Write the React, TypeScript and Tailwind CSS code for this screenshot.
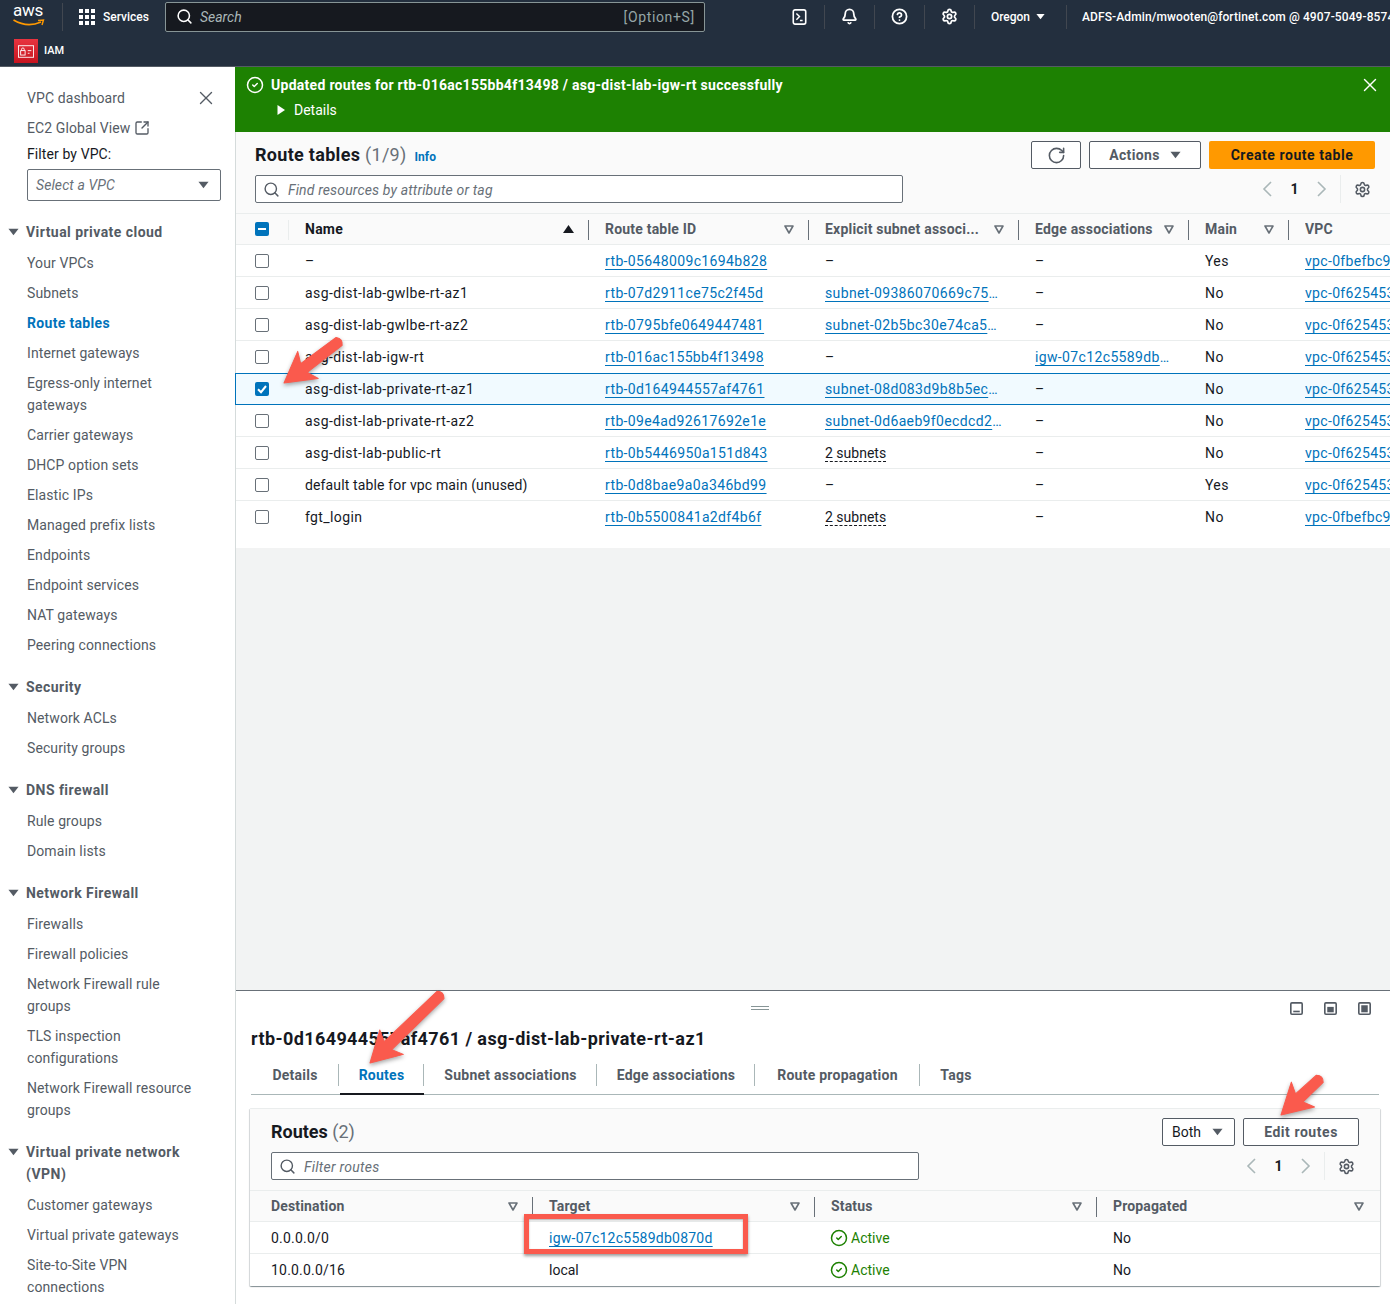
import { Bell, CircleCheck, CircleHelp, RotateCw, Search, Settings, SquareArrowOutUpRight, X } from "lucide-react";

const Caret = ({ className = "" }: { className?: string }) => (
  <svg viewBox="0 0 12 8" className={className}><polygon points="0.5,0.5 11.5,0.5 6,7.5" fill="currentColor" /></svg>
);
const FilterCaret = ({ className = "" }: { className?: string }) => (
  <svg viewBox="0 0 10 9" className={`h-[9px] w-[10px] text-[#687078] ${className}`}><polygon points="1,1 9,1 5,8" fill="none" stroke="currentColor" strokeWidth="1.6" strokeLinejoin="round" /></svg>
);
const SortUp = () => (
  <svg viewBox="0 0 11 8" className="h-[8px] w-[11px] text-[#16191f]"><polygon points="5.5,0 11,8 0,8" fill="currentColor" /></svg>
);
const Box = ({ state }: { state?: "on" | "mixed" }) =>
  state ? (
    <span className="flex h-[14px] w-[14px] items-center justify-center rounded-[2px] bg-[#0073bb]">
      {state === "on" ? (
        <svg viewBox="0 0 14 14" className="h-[14px] w-[14px]"><path d="M3 7.2 6 10.2 11 4" fill="none" stroke="#fff" strokeWidth="2" /></svg>
      ) : (
        <span className="h-[2px] w-[8px] bg-white" />
      )}
    </span>
  ) : (
    <span className="block h-[14px] w-[14px] rounded-[2px] border border-[#687078] bg-white" />
  );

const Chev = ({ d }: { d: string }) => (
  <svg viewBox="0 0 10 16" className="h-[16px] w-[10px]"><path d={d} fill="none" stroke="currentColor" strokeWidth="1.6" /></svg>
);

const Pager = () => (
  <div className="flex h-[28px] items-center text-[#aab7b8]">
    <Chev d="M9 1 2 8l7 7" />
    <span className="w-[45px] text-center text-[14px] font-bold text-[#16191f]">1</span>
    <Chev d="M1 1l7 7-7 7" />
    <span className="ml-[13px] h-[28px] w-px bg-[#eaeded]" />
    <Settings size={17} strokeWidth={2.2} className="ml-[13px] text-[#545b64]" />
  </div>
);

const FindBox = ({ w, text, track }: { w: string; text: string; track: string }) => (
  <div className={`flex h-[28px] items-center rounded-[2px] border border-[#687078] bg-white pl-[7px] ${w}`}>
    <Search size={17} strokeWidth={2} className="text-[#545b64]" />
    <span className={`ml-[8px] pt-[1px] text-[14px] italic text-[#687078] ${track}`}>{text}</span>
  </div>
);

const sections: { title: string[]; items: string[][] }[] = [
  { title: ["Virtual private cloud"], items: [["Your VPCs"], ["Subnets"], ["Route tables"], ["Internet gateways"], ["Egress-only internet", "gateways"], ["Carrier gateways"], ["DHCP option sets"], ["Elastic IPs"], ["Managed prefix lists"], ["Endpoints"], ["Endpoint services"], ["NAT gateways"], ["Peering connections"]] },
  { title: ["Security"], items: [["Network ACLs"], ["Security groups"]] },
  { title: ["DNS firewall"], items: [["Rule groups"], ["Domain lists"]] },
  { title: ["Network Firewall"], items: [["Firewalls"], ["Firewall policies"], ["Network Firewall rule", "groups"], ["TLS inspection", "configurations"], ["Network Firewall resource", "groups"]] },
  { title: ["Virtual private network", "(VPN)"], items: [["Customer gateways"], ["Virtual private gateways"], ["Site-to-Site VPN", "connections"]] },
];

const Sidebar = () => (
  <aside className="w-[236px] shrink-0 overflow-hidden border-r border-[#d5dbdb] bg-white pt-[20px] text-[14px] leading-[22px] tracking-[0.1px]">
    <div className="flex flex-col gap-[8px] pl-[27px]">
      <div className="flex h-[22px] items-center justify-between pr-[18px] text-[#545b64]">
        <span>VPC dashboard</span>
        <X size={22} strokeWidth={1.5} />
      </div>
      <div className="flex h-[22px] items-center gap-[4px] text-[#545b64]">
        <span>EC2 Global View</span>
        <SquareArrowOutUpRight size={16} strokeWidth={2} className="text-[#545b64]" />
      </div>
    </div>
    <div className="mt-[4px] pl-[27px] text-[#16191f]">Filter by VPC:</div>
    <div className="ml-[27px] mt-[4px] flex h-[32px] w-[194px] items-center justify-between rounded-[2px] border border-[#687078] pl-[8px] pr-[11px]">
      <span className="italic text-[#687078]">Select a VPC</span>
      <Caret className="h-[8px] w-[11px] text-[#545b64]" />
    </div>
    <div className="mt-[20px] flex flex-col gap-[20px]">
      {sections.map((s) => (
        <div key={s.title[0]}>
          <div className="relative pl-[26px] font-bold tracking-[0.45px] text-[#545b64]">
            <Caret className="absolute left-[8px] top-[7px] h-[8px] w-[11px]" />
            {s.title.map((t) => <div key={t}>{t}</div>)}
          </div>
          <div className="mt-[9px] flex flex-col gap-[8px] pl-[27px]">
            {s.items.map((it) => (
              <div key={it[0]} className={it[0] === "Route tables" ? "font-bold tracking-[0.33px] text-[#0073bb]" : "text-[#545b64]"}>
                {it.map((l) => <div key={l}>{l}</div>)}
              </div>
            ))}
          </div>
        </div>
      ))}
    </div>
  </aside>
);

const cols = "grid grid-cols-[53px_300px_220px_210px_170px_100px_1fr]";
const rows = [
  ["–", "rtb-05648009c1694b828", "–", "–", "Yes", "vpc-0fbefbc9a17"],
  ["asg-dist-lab-gwlbe-rt-az1", "rtb-07d2911ce75c2f45d", "subnet-09386070669c75d41", "–", "No", "vpc-0f625453a17"],
  ["asg-dist-lab-gwlbe-rt-az2", "rtb-0795bfe0649447481", "subnet-02b5bc30e74ca5d42", "–", "No", "vpc-0f625453a17"],
  ["asg-dist-lab-igw-rt", "rtb-016ac155bb4f13498", "–", "igw-07c12c5589db0870d", "No", "vpc-0f625453a17"],
  ["asg-dist-lab-private-rt-az1", "rtb-0d164944557af4761", "subnet-08d083d9b8b5ec412", "–", "No", "vpc-0f625453a17"],
  ["asg-dist-lab-private-rt-az2", "rtb-09e4ad92617692e1e", "subnet-0d6aeb9f0ecdcd2141", "–", "No", "vpc-0f625453a17"],
  ["asg-dist-lab-public-rt", "rtb-0b5446950a151d843", "2 subnets", "–", "No", "vpc-0f625453a17"],
  ["default table for vpc main (unused)", "rtb-0d8bae9a0a346bd99", "–", "–", "Yes", "vpc-0f625453a17"],
  ["fgt_login", "rtb-0b5500841a2df4b6f", "2 subnets", "–", "No", "vpc-0fbefbc9a17"],
];

const Cell = ({ v }: { v: string }) => {
  if (v === "2 subnets") return <div className="truncate px-[16px]"><span className="border-b border-dashed border-[#16191f]">{v}</span></div>;
  if (v.startsWith("vpc-")) return <div className="overflow-hidden whitespace-nowrap pl-[16px] tracking-[0.33px] text-[#0073bb] underline underline-offset-[3px]">{v}</div>;
  if (/^(rtb|subnet|igw)-/.test(v)) return <div className="truncate px-[16px] tracking-[0.36px] text-[#0073bb] underline underline-offset-[3px]">{v}</div>;
  if (v.startsWith("default")) return <div className="truncate px-[16px] tracking-[0.14px]">{v}</div>;
  return <div className="truncate px-[16px] tracking-[0.4px]">{v}</div>;
};

const Th = ({ label, icon = true }: { label: string; icon?: boolean }) => (
  <div className="flex h-full items-center justify-between pl-[16px] pr-[15px]">
    <span className="truncate font-bold tracking-[0.2px] text-[#545b64]">{label}</span>
    {icon && <FilterCaret className="shrink-0" />}
  </div>
);
const Sep = () => <span className="absolute right-0 top-[6px] h-[20px] w-px bg-[#687078]" />;

const RouteTable = () => (
  <section className="bg-white">
    <div className="bg-[#fafafa]">
      <div className="flex justify-between pl-[19px] pr-[15px] pt-[9px]">
        <div className="flex h-[28px] items-center">
          <h1 className="text-[18px] font-bold tracking-[0.3px] text-[#16191f]">Route tables <span className="font-normal text-[#687078]">(1/9)</span></h1>
          <span className="ml-[8px] mt-[3px] text-[12px] font-bold text-[#0073bb]">Info</span>
        </div>
        <div className="flex gap-[8px]">
          <button className="flex h-[28px] w-[50px] items-center justify-center rounded-[2px] border border-[#545b64] bg-white text-[#545b64]"><RotateCw size={19} strokeWidth={2} /></button>
          <button className="flex h-[28px] w-[112px] items-center justify-center gap-[10px] rounded-[2px] border border-[#545b64] bg-white font-bold tracking-[0.35px] text-[#545b64]">Actions<Caret className="h-[8px] w-[11px]" /></button>
          <button className="h-[28px] w-[166px] rounded-[2px] bg-[#ff9900] font-bold tracking-[0.55px] text-[#16191f]">Create route table</button>
        </div>
      </div>
      <div className="mt-[6px] flex justify-between pl-[19px] pr-[19px]">
        <FindBox w="w-[648px]" text="Find resources by attribute or tag" track="tracking-[0.15px]" />
        <Pager />
      </div>
      <div className={`${cols} mt-[10px] h-[32px] items-center border-y border-[#eaeded]`}>
        <div className="relative flex h-full items-center pl-[19px]"><Box state="mixed" /><span className="absolute right-0 top-[6px] h-[20px] w-px bg-[#eaeded]" /></div>
        <div className="relative flex h-full items-center justify-between pl-[16px] pr-[15px]"><span className="font-bold tracking-[0.25px] text-[#16191f]">Name</span><SortUp /><Sep /></div>
        <div className="relative h-full"><Th label="Route table ID" /><Sep /></div>
        <div className="relative h-full"><Th label="Explicit subnet associ..." /><Sep /></div>
        <div className="relative h-full"><Th label="Edge associations" /><Sep /></div>
        <div className="relative h-full"><Th label="Main" /><Sep /></div>
        <div className="relative h-full"><Th label="VPC" icon={false} /></div>
      </div>
    </div>
    {rows.map((r, i) => (
      <div key={i} className={`${cols} h-[32px] items-center text-[#16191f] ${i === 4 ? "-ml-px border-x-0 border-y border-l border-[#0073bb] bg-[#f1faff]" : i === 8 ? "" : i === 3 ? "" : "border-b border-[#eaeded]"}`}>
        <div className="flex items-center pl-[19px]"><Box state={i === 4 ? "on" : undefined} /></div>
        {r.map((v, j) => <Cell key={j} v={v} />)}
      </div>
    ))}
    <div className="h-[15px]" />
  </section>
);

const PrefIcon = ({ inner }: { inner: string }) => (
  <svg viewBox="0 0 12 12" className="h-[13px] w-[13px] text-[#545b64]">
    <rect x="0.75" y="0.75" width="10.5" height="10.5" rx="1" fill="none" stroke="currentColor" strokeWidth="1.5" />
    <path d={inner} fill="currentColor" />
  </svg>
);

const tabs = [
  { t: "Details", w: "w-[88px]" },
  { t: "Routes", w: "w-[85px]" },
  { t: "Subnet associations", w: "w-[173px]" },
  { t: "Edge associations", w: "w-[158px]" },
  { t: "Route propagation", w: "w-[165px]" },
  { t: "Tags", w: "w-[72px]" },
];

const thCols = "grid grid-cols-[283px_282px_282px_1fr]";
const RouteRow = ({ d, t, link, last }: { d: string; t: string; link?: boolean; last?: boolean }) => (
  <div className={`${thCols} h-[32px] items-center bg-white text-[#16191f] ${last ? "" : "border-b border-[#eaeded]"}`}>
    <div className="pl-[21px] tracking-[0.2px]">{d}</div>
    <div className="pl-[16px]">{link ? <span className="tracking-[0.25px] text-[#0073bb] underline underline-offset-[3px]">{t}</span> : t}</div>
    <div className="flex items-center gap-[3px] pl-[15px] text-[#1d8102]"><CircleCheck size={18} strokeWidth={2} />Active</div>
    <div className="pl-[16px]">No</div>
  </div>
);

const SplitPanel = () => (
  <section className="relative h-[314px] shrink-0 border-t border-[#687078] bg-white">
    <div className="flex h-[36px] items-start">
      <div className="flex flex-1 justify-center pr-[6px] pt-[15px]"><div className="h-[4px] w-[18px] border-y border-[#879596]" /></div>
      <div className="flex gap-[21px] pr-[19px] pt-[11px]">
        <PrefIcon inner="M3 8h6v1.5H3z" />
        <PrefIcon inner="M3 4.5h6v5H3z" />
        <PrefIcon inner="M3 3h6v6.5H3z" />
      </div>
    </div>
    <div className="pl-[15px] text-[18px] font-bold leading-[24px] tracking-[0.4px] text-[#16191f]">rtb-0d164944557af4761 / asg-dist-lab-private-rt-az1</div>
    <div className="ml-[15px] mr-[11px] mt-[9px] flex h-[35px] items-start border-b border-[#aab7b8]">
      {tabs.map((t, i) => (
        <div key={t.t} className={`relative flex h-[34px] items-center justify-center pb-[4px] font-bold tracking-[0.25px] ${t.w} ${i === 1 ? "text-[#0073bb]" : "text-[#545b64]"}`}>
          {t.t}
          {i === 1 && <span className="absolute bottom-[-1px] left-[1px] right-0 h-[2px] bg-[#16191f]" />}
          {i < 5 && <span className="absolute right-0 top-[4px] h-[22px] w-px bg-[#aab7b8]" />}
        </div>
      ))}
    </div>
    <div className="ml-[14px] mr-[10px] mt-[13px] overflow-hidden rounded-[1px] border-t border-[#eaeded] bg-[#fafafa] shadow-[0_1px_1px_0_rgba(0,28,36,0.3),1px_1px_1px_0_rgba(0,28,36,0.15),-1px_1px_1px_0_rgba(0,28,36,0.15)]">
      <div className="flex justify-between pl-[21px] pr-[21px] pt-[9px]">
        <h2 className="text-[18px] font-bold leading-[28px] text-[#16191f]">Routes <span className="font-normal text-[#687078]">(2)</span></h2>
        <div className="flex gap-[8px]">
          <div className="flex h-[28px] w-[73px] items-center justify-between rounded-[2px] border border-[#545b64] bg-white pl-[9px] pr-[11px] text-[#16191f]">Both<Caret className="h-[8px] w-[11px] text-[#545b64]" /></div>
          <button className="h-[28px] w-[116px] rounded-[2px] border border-[#545b64] bg-white font-bold tracking-[0.55px] text-[#545b64]">Edit routes</button>
        </div>
      </div>
      <div className="mt-[6px] flex justify-between pl-[21px] pr-[25px]">
        <FindBox w="w-[648px]" text="Filter routes" track="tracking-[0.25px]" />
        <Pager />
      </div>
      <div className={`${thCols} mt-[10px] h-[32px] border-y border-[#eaeded]`}>
        {["Destination", "Target", "Status", "Propagated"].map((l, i) => (
          <div key={l} className="relative h-full">
            <div className={`flex h-full items-center justify-between ${i === 0 ? "pl-[21px]" : "pl-[16px]"} ${i === 3 ? "pr-[16px]" : "pr-[15px]"}`}>
              <span className="font-bold tracking-[0.15px] text-[#545b64]">{l}</span>
              <FilterCaret />
            </div>
            {i < 3 && <Sep />}
          </div>
        ))}
      </div>
      <RouteRow d="0.0.0.0/0" t="igw-07c12c5589db0870d" link />
      <RouteRow d="10.0.0.0/16" t="local" last />
    </div>
  </section>
);

const Arrow = ({ x, y, angle, len }: { x: number; y: number; angle: number; len: number }) => (
  <g transform={`translate(${x} ${y}) rotate(${angle})`}>
    <path
      d={`M0 0 L30 -17 L25 -5.5 L${len - 3} -5 Q${len + 2} 0 ${len - 3} 5 L25 5.5 L30 17 Z`}
      fill="#fa5a4d"
      stroke="#fa5a4d"
      strokeWidth="1"
      strokeLinejoin="round"
    />
  </g>
);

const Annotations = () => (
  <svg className="pointer-events-none absolute left-0 top-0 h-[1304px] w-[1390px] [filter:drop-shadow(0_2px_2px_rgba(0,0,0,0.35))]" viewBox="0 0 1390 1304">
    <Arrow x={284} y={383} angle={-37} len={72} />
    <Arrow x={370} y={1063} angle={-44} len={101} />
    <Arrow x={1281} y={1115} angle={-43} len={56} />
  </svg>
);

const TopBar = () => (
  <header className="h-[67px] shrink-0 border-b border-[#545b64] bg-[#232f3e] text-white">
    <div className="flex h-[33px] items-center whitespace-nowrap">
      <div className="relative ml-[13px] h-[28px] w-[32px] shrink-0">
        <span className="absolute left-0 top-[-3px] text-[17px] leading-[20px] tracking-[-0.3px]">aws</span>
        <svg viewBox="0 0 32 9" className="absolute left-0 top-[16px] h-[9px] w-[32px]">
          <path d="M0.5 1 Q14 9 28 3" fill="none" stroke="#ff9900" strokeWidth="1.6" />
          <path d="M25 1.5 L30.5 1 L29 6" fill="none" stroke="#ff9900" strokeWidth="1.4" />
        </svg>
      </div>
      <span className="ml-[17px] h-[28px] w-px shrink-0 bg-[#414750]" />
      <div className="ml-[16px] grid h-[16px] w-[16px] shrink-0 grid-cols-3 gap-[2px]">
        {Array.from({ length: 9 }).map((_, i) => <span key={i} className="bg-white" />)}
      </div>
      <span className="ml-[8px] text-[12px] font-medium">Services</span>
      <div className="ml-[16px] flex h-[30px] w-[540px] shrink-0 items-center rounded-[2px] border border-[#879596] bg-[#16191f] pl-[10px] pr-[9px]">
        <Search size={17} strokeWidth={2.2} className="text-white" />
        <span className="ml-[7px] text-[14px] italic text-[#aab7b8]">Search</span>
        <span className="ml-auto text-[14px] tracking-[0.65px] text-[#95a5a6]">[Option+S]</span>
      </div>
      <div className="ml-[87px] flex w-[15px] shrink-0 justify-center">
        <svg viewBox="0 0 16 18" className="h-[16px] w-[15px]"><rect x="1" y="1" width="14" height="16" rx="2" fill="none" stroke="#fff" strokeWidth="1.8" /><path d="M4.5 5 8 8.5 4.5 12 M8.5 13h3" fill="none" stroke="#fff" strokeWidth="1.6" /></svg>
      </div>
      <span className="ml-[17px] h-[24px] w-px shrink-0 bg-[#414750]" />
      <Bell size={17} strokeWidth={2.5} className="ml-[16px] shrink-0" />
      <span className="ml-[16px] h-[24px] w-px shrink-0 bg-[#414750]" />
      <CircleHelp size={17} strokeWidth={2.5} className="ml-[16px] shrink-0" />
      <span className="ml-[16px] h-[24px] w-px shrink-0 bg-[#414750]" />
      <Settings size={17} strokeWidth={2.5} className="ml-[16px] shrink-0" />
      <span className="ml-[16px] h-[24px] w-px shrink-0 bg-[#414750]" />
      <span className="ml-[16px] text-[12px] font-medium">Oregon</span>
      <Caret className="ml-[6px] h-[7px] w-[9px] shrink-0" />
      <span className="ml-[21px] h-[24px] w-px shrink-0 bg-[#414750]" />
      <span className="ml-[15px] shrink-0 text-[12px] font-medium tracking-[0.1px]">ADFS-Admin/mwooten@fortinet.com @ 4907-5049-8574</span>
    </div>
    <div className="flex h-[33px] items-center pl-[14px] pt-[3px]">
      <span className="flex h-[24px] w-[24px] items-center justify-center bg-gradient-to-b from-[#e8333f] to-[#c7131f]">
        <svg viewBox="0 0 18 14" className="h-[13px] w-[16px]"><rect x="0.5" y="0.5" width="17" height="13" fill="none" stroke="#fff" /><rect x="3" y="6" width="5" height="5" fill="none" stroke="#fff" /><path d="M4 6V4.5a1.5 1.5 0 0 1 3 0V6M11 6h4M11 9h2" fill="none" stroke="#fff" /></svg>
      </span>
      <span className="ml-[6px] text-[11px] font-medium">IAM</span>
    </div>
  </header>
);

export default function App() {
  return (
    <div className="relative flex h-[1304px] w-[1390px] flex-col overflow-hidden bg-white text-[14px] leading-[22px] [font-family:Roboto,sans-serif]">
      <TopBar />
      <div className="flex min-h-0 flex-1">
        <Sidebar />
        <main className="flex min-w-0 flex-1 flex-col bg-[#f2f3f3]">
          <div className="-ml-px h-[65px] shrink-0 bg-[#1d8102] text-white">
            <div className="flex items-start pl-[11px] pr-[9px] pt-[7px]">
              <CircleCheck size={18} strokeWidth={2} className="mt-[2px] shrink-0" />
              <span className="ml-[7px] font-bold tracking-[0.28px]">Updated routes for rtb-016ac155bb4f13498 / asg-dist-lab-igw-rt successfully</span>
              <X size={22} strokeWidth={1.5} className="ml-auto" />
            </div>
            <div className="mt-[3px] flex items-center pl-[42px]">
              <svg viewBox="0 0 8 10" className="h-[10px] w-[8px]"><polygon points="0.5,0 8,5 0.5,10" fill="#fff" /></svg>
              <span className="ml-[9px]">Details</span>
            </div>
          </div>
          <RouteTable />
          <div className="flex-1" />
          <SplitPanel />
        </main>
      </div>
      <div className="absolute left-[524px] top-[1214px] h-[40px] w-[224px] border-[5px] border-[#fa5a4d] shadow-[0_2px_3px_rgba(0,0,0,0.4),inset_0_1px_2px_rgba(0,0,0,0.3)]" />
      <Annotations />
    </div>
  );
}
